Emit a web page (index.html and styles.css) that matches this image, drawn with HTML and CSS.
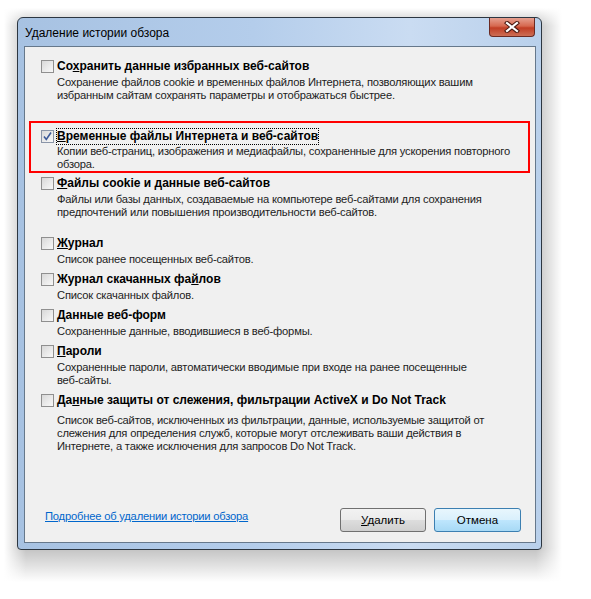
FILE: index.html
```html
<!DOCTYPE html>
<html lang="ru">
<head>
<meta charset="UTF-8">
<meta name="viewport" content="width=device-width, initial-scale=1.0">
<title>Удаление истории обзора</title>
<link rel="stylesheet" href="styles.css">
</head>
<body>

<div class="window-shadow">
<div class="window">
    <div class="titlebar">
        <div class="title">Удаление истории обзора</div>
        <div class="close-btn">
            <svg width="16" height="12" viewBox="0 0 16 12">
                <path d="M3 2 L13 10 M13 2 L3 10" stroke="#4a1a12" stroke-width="4.2" stroke-linecap="square"/>
                <path d="M3 2 L13 10 M13 2 L3 10" stroke="#ffffff" stroke-width="2.2" stroke-linecap="square"/>
            </svg>
        </div>
    </div>

    <div class="client">
        <div class="options">
            <div class="option">
                <div class="option-head"><span class="checkbox"></span><span class="label">Со<u>х</u>ранить данные избранных веб-сайтов</span></div>
                <div class="option-desc">Сохранение файлов cookie и временных файлов Интернета, позволяющих вашим<br>избранным сайтам сохранять параметры и отображаться быстрее.</div>
            </div>
            <div class="option option-marked">
                <div class="option-head">
                    <span class="checkbox checked">
                        <svg width="11" height="11" viewBox="0 0 11 11"><path d="M2 5.5 L4.3 8.5 L9 1.5" fill="none" stroke="#3d5a98" stroke-width="1.6"/></svg>
                    </span>
                    <span class="label focused"><u>В</u>ременные файлы Интернета и веб-сайтов</span>
                </div>
                <div class="option-desc">Копии веб-страниц, изображения и медиафайлы, сохраненные для ускорения повторного<br>обзора.</div>
            </div>
            <div class="option option-after-marked">
                <div class="option-head"><span class="checkbox"></span><span class="label"><u>Ф</u>айлы cookie и данные веб-сайтов</span></div>
                <div class="option-desc">Файлы или базы данных, создаваемые на компьютере веб-сайтами для сохранения<br>предпочтений или повышения производительности веб-сайтов.</div>
            </div>
            <div class="option option-spaced">
                <div class="option-head"><span class="checkbox"></span><span class="label"><u>Ж</u>урнал</span></div>
                <div class="option-desc">Список ранее посещенных веб-сайтов.</div>
            </div>
            <div class="option">
                <div class="option-head"><span class="checkbox"></span><span class="label">Журнал скачанных фа<u>й</u>лов</span></div>
                <div class="option-desc">Список скачанных файлов.</div>
            </div>
            <div class="option">
                <div class="option-head"><span class="checkbox"></span><span class="label"><u>Д</u>анные веб-форм</span></div>
                <div class="option-desc">Сохраненные данные, вводившиеся в веб-формы.</div>
            </div>
            <div class="option">
                <div class="option-head"><span class="checkbox"></span><span class="label"><u>П</u>ароли</span></div>
                <div class="option-desc">Сохраненные пароли, автоматически вводимые при входе на ранее посещенные<br>веб-сайты.</div>
            </div>
            <div class="option option-tracking">
                <div class="option-head"><span class="checkbox"></span><span class="label">Да<u>н</u>ные защиты от слежения, фильтрации ActiveX и Do Not Track</span></div>
                <div class="option-desc">Список веб-сайтов, исключенных из фильтрации, данные, используемые защитой от<br>слежения для определения служб, которые могут отслеживать ваши действия в<br>Интернете, а также исключения для запросов Do Not Track.</div>
            </div>
        </div>

        <div class="footer">
            <a class="help-link" href="#">Подробнее об удалении истории обзора</a>
            <div class="buttons">
                <button class="btn btn-delete"><u>У</u>далить</button>
                <button class="btn btn-cancel">Отмена</button>
            </div>
        </div>
    </div>
</div>
</div>

</body>
</html>
```

FILE: styles.css
```css
html {
    background-color: #ffffff;
}

body {
    margin: 0;
    padding: 8px 0 0 4px;
    font-family: 'Liberation Sans', Arial, sans-serif;
    font-size: 12px;
    color: #000000;
}

/* soft shadow: grey base faded out with white gradients at the edges */
.window-shadow {
    width: 525px;
    padding: 9px 20px 32px 13px;
    background:
        linear-gradient(to right, #ffffff 0, rgba(255, 255, 255, 0) 22px, rgba(255, 255, 255, 0) calc(100% - 26px), #ffffff 100%),
        linear-gradient(to bottom, #ffffff 0, rgba(255, 255, 255, 0) 18px, rgba(255, 255, 255, 0) calc(100% - 34px), #ffffff 100%),
        #c2c2c2;
}

.window {
    box-sizing: border-box;
    width: 525px;
    height: 533px;
    border: 1px solid #2c3641;
    border-radius: 6px 6px 4px 4px;
    padding: 0 5px 6px 6px;
    background: linear-gradient(to right, #a7c2e2 0%, #b4cdeb 45%, #cadcf2 75%, #b9d0eb 100%);
    display: flex;
    flex-direction: column;
}

.titlebar {
    height: 28px;
    display: flex;
    justify-content: space-between;
    align-items: flex-start;
}

.title {
    padding: 7px 0 0 1px;
    line-height: 16px;
    font-size: 12px;
    color: #000000;
}

.close-btn {
    box-sizing: border-box;
    width: 46px;
    height: 19px;
    margin-right: 1px;
    border: 1px solid #6b2a22;
    border-top: none;
    border-radius: 0 0 4px 4px;
    background: linear-gradient(#e6a090 0%, #d6684f 45%, #c13e25 55%, #cc6e55 100%);
    display: flex;
    justify-content: center;
    align-items: center;
}

.client {
    box-sizing: border-box;
    height: 497px;
    border: 1px solid #66788b;
    background-color: #f0f0f0;
    display: flex;
    flex-direction: column;
}

.options {
    padding-top: 11px;
    margin: 0 5px 0 4px;
}

.option {
    padding-left: 12px;
    margin-top: 5px;
}

.option:first-child { margin-top: 0; }

.option-marked {
    margin-top: 19px;
    padding: 5px 0 0 10px;
    border: 2px solid #ff0000;
}

.option-marked .option-desc { margin-top: 1px; }

.option-after-marked { margin-top: 2px; }
.option-spaced { margin-top: 16px; }
.option-tracking .option-desc { margin-top: 6px; }

.option-head {
    display: flex;
    align-items: center;
    height: 16px;
    gap: 3px;
}

.label {
    font-weight: bold;
    white-space: nowrap;
    line-height: 15px;
}

.label.focused {
    outline: 1px dotted #000000;
    outline-offset: 0;
}

.checkbox {
    box-sizing: border-box;
    width: 13px;
    height: 13px;
    border: 1px solid #8f8f8f;
    background: linear-gradient(135deg, #d8d8d8 0%, #ececec 60%, #f8f8f8 100%);
    display: flex;
    justify-content: center;
    align-items: center;
}

.checkbox.checked {
    border-color: #8a95a8;
}

.option-desc {
    margin-top: 2px;
    padding-left: 16px;
    font-size: 11.2px;
    letter-spacing: -0.2px;
    line-height: 13px;
    white-space: nowrap;
    color: #1c1c1c;
}

.footer {
    margin-top: auto;
    padding: 0 14px 10px 20px;
    display: flex;
    justify-content: space-between;
    align-items: flex-start;
}

.help-link {
    line-height: 16px;
    font-size: 11.2px;
    letter-spacing: -0.2px;
    color: #0066cc;
    text-decoration: underline;
}

.buttons {
    display: flex;
    gap: 8px;
}

.btn {
    box-sizing: border-box;
    height: 24px;
    padding: 0;
    border-radius: 3px;
    font-family: 'Liberation Sans', Arial, sans-serif;
    font-size: 11.5px;
    color: #000000;
}

.btn-delete {
    width: 86px;
    border: 1px solid #707070;
    background: linear-gradient(#f2f2f2 0%, #ebebeb 50%, #dddddd 51%, #cfcfcf 100%);
}

.btn-cancel {
    width: 87px;
    border: 1px solid #3c7fb1;
    background: linear-gradient(#e8f6fd 0%, #d9f0fc 50%, #bee6fd 51%, #a7d9f5 100%);
}
```
